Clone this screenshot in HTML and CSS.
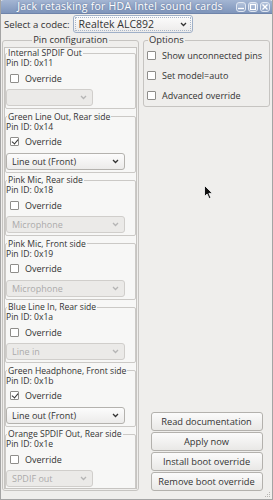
FILE: index.html
```html
<!DOCTYPE html>
<html lang="en">
<head>
    <meta charset="UTF-8">
    <meta name="viewport" content="width=device-width, initial-scale=1.0">
    <title>Jack retasking for HDA Intel sound cards</title>
    <link rel="stylesheet" href="styles.css">
</head>
<body>
    <div class="window">
        <div class="titlebar">
            <span class="title">Jack retasking for HDA Intel sound cards</span>
            <div class="wm-buttons">
                <span class="wm-btn"><svg width="8" height="8" viewBox="0 0 8 8"><path d="M1 5.5h6" stroke="#fff" stroke-width="1.4"/></svg></span>
                <span class="wm-btn"><svg width="8" height="8" viewBox="0 0 8 8"><rect x="1.5" y="1.5" width="5" height="5" fill="none" stroke="#fff" stroke-width="1.2"/></svg></span>
                <span class="wm-btn"><svg width="8" height="8" viewBox="0 0 8 8"><path d="M1.5 1.5l5 5M6.5 1.5l-5 5" stroke="#fff" stroke-width="1.4"/></svg></span>
            </div>
        </div>

        <div class="content">
            <div class="codec-row">
                <span class="codec-label">Select a codec:</span>
                <div class="combo focused codec-combo">
                    <span class="combo-text">Realtek ALC892</span>
                    <svg class="chevron" width="7" height="5" viewBox="0 0 7 5"><path d="M1 1l2.5 2.5L6 1" fill="none" stroke="#333" stroke-width="1.3"/></svg>
                </div>
            </div>

            <div class="columns">
                <fieldset class="frame pins-frame">
                    <legend>Pin configuration</legend>
                    <div class="viewport" id="pinList"></div>
                </fieldset>

                <div class="right-col">
                    <fieldset class="frame options">
                        <legend>Options</legend>
                        <label class="check-row"><span class="checkbox"></span>Show unconnected pins</label>
                        <label class="check-row"><span class="checkbox"></span>Set model=auto</label>
                        <label class="check-row"><span class="checkbox"></span>Advanced override</label>
                    </fieldset>

                    <div class="buttons">
                        <button class="btn">Read documentation</button>
                        <button class="btn">Apply now</button>
                        <button class="btn">Install boot override</button>
                        <button class="btn">Remove boot override</button>
                    </div>
                </div>
            </div>
        </div>

        <svg class="grip" width="6" height="6" viewBox="0 0 6 6">
            <rect x="4" y="0" width="1" height="1" fill="#b8b6b3"/>
            <rect x="2" y="2" width="1" height="1" fill="#b8b6b3"/>
            <rect x="4" y="2" width="1" height="1" fill="#b8b6b3"/>
            <rect x="0" y="4" width="1" height="1" fill="#b8b6b3"/>
            <rect x="2" y="4" width="1" height="1" fill="#b8b6b3"/>
            <rect x="4" y="4" width="1" height="1" fill="#b8b6b3"/>
        </svg>

        <svg class="cursor" width="10" height="15" viewBox="0 0 10 15">
            <path d="M0.5 0.5v11l2.6-2.5 2 4.6 1.8-0.8-2-4.4h3.6z" fill="#111" stroke="#fff" stroke-width="0.8"/>
        </svg>
    </div>

    <script>
        let pins = [
            { name: "Internal SPDIF Out", id: "0x11", override: false, value: "", width: 87 },
            { name: "Green Line Out, Rear side", id: "0x14", override: true, value: "Line out (Front)", width: 119 },
            { name: "Pink Mic, Rear side", id: "0x18", override: false, value: "Microphone", width: 119 },
            { name: "Pink Mic, Front side", id: "0x19", override: false, value: "Microphone", width: 119 },
            { name: "Blue Line In, Rear side", id: "0x1a", override: false, value: "Line in", width: 119 },
            { name: "Green Headphone, Front side", id: "0x1b", override: true, value: "Line out (Front)", width: 119 },
            { name: "Orange SPDIF Out, Rear side", id: "0x1e", override: false, value: "SPDIF out", width: 87 }
        ];

        let list = document.getElementById("pinList");
        for (let pin of pins) {
            let frame = document.createElement("fieldset");
            frame.className = "pin";
            let state = pin.override ? "" : " disabled";
            let stroke = pin.override ? "#333" : "#b5b5b5";
            frame.innerHTML = `
                <legend>${pin.name}</legend>
                <div class="pin-id">Pin ID: ${pin.id}</div>
                <label class="check-row"><span class="checkbox${pin.override ? " checked" : ""}"></span>Override</label>
                <div class="combo${state}" style="width: ${pin.width}px">
                    <span class="combo-text">${pin.value}</span>
                    <svg class="chevron" width="7" height="5" viewBox="0 0 7 5"><path d="M1 1l2.5 2.5L6 1" fill="none" stroke="${stroke}" stroke-width="1.3"/></svg>
                </div>
            `;
            list.appendChild(frame);
        }
    </script>
</body>
</html>
```

FILE: styles.css
```css
* {
    box-sizing: border-box;
}
body {
    margin: 0;
    font-family: "Open Sans", "DejaVu Sans", sans-serif;
    font-size: 9px;
    color: #333;
    background: #d8d8d8;
}
.window {
    position: relative;
    width: 273px;
    height: 500px;
    background: #efeeec;
    border: 1px solid #a4a4a4;
    border-top: none;
    overflow: hidden;
}
.titlebar {
    display: flex;
    align-items: center;
    height: 14px;
    margin: 0 -1px;
    background: linear-gradient(#a4b6d3, #7f95bb);
    border-radius: 4px 4px 0 0;
    border-bottom: 1px solid #6f84aa;
}
.title {
    flex: 1;
    text-align: center;
    color: #fff;
    font-size: 10.5px;
    line-height: 13px;
    text-shadow: 0 0 2px #5a6d90;
    letter-spacing: 0.25px;
    white-space: nowrap;
    padding-left: 4px;
}
.wm-buttons {
    display: flex;
    gap: 2px;
    margin-right: 3px;
}
.wm-btn {
    display: flex;
    align-items: center;
    justify-content: center;
    width: 10px;
    height: 10px;
    border: 1px solid #dfe6f1;
    border-radius: 3px;
    background: linear-gradient(#b3c3dc, #8fa3c5);
}
.content {
    padding: 1px 2px 0 1px;
}
.codec-row {
    display: flex;
    align-items: center;
    gap: 3px;
}
.codec-label {
    padding-left: 2px;
    font-size: 9.6px;
}
.combo {
    display: flex;
    align-items: center;
    justify-content: space-between;
    height: 17px;
    padding: 0 5px 0 5px;
    border: 1px solid #b4b2ae;
    border-radius: 3px;
    background: linear-gradient(#fcfcfc, #ecebea);
}
.codec-combo {
    width: 120px;
    height: 18px;
    font-size: 10.5px;
}
.combo.focused {
    border-color: #9fb0c8;
    outline: 1px dotted #a9b6c9;
    outline-offset: -3px;
}
.combo.disabled {
    color: #ababab;
    border-color: #d0cecb;
    background: #ebeae8;
}
.columns {
    display: flex;
    gap: 4px;
    height: 456px;
    margin-top: 2px;
}
.frame {
    margin: 0;
    border: 1px solid #c6c4c1;
    border-radius: 3px;
    min-width: 0;
}
.frame legend {
    padding: 0 1px;
    line-height: 10px;
    font-size: 9.4px;
}
.pins-frame {
    width: 137px;
    padding: 2px 1px 1px 1px;
}
.pins-frame legend {
    margin: 0 auto;
}
.viewport {
    height: 100%;
    overflow: hidden;
    border: 1px solid #c6c4c1;
    background: #f7f7f6;
}
.pin {
    margin: 0 0 2.5px;
    padding: 0 0 2px 0;
    border: 1px solid #cbc9c6;
    border-radius: 2px;
    min-width: 0;
}
.pin legend {
    padding: 0 1px;
    margin-left: 1px;
    font-size: 8.6px;
    line-height: 10px;
    white-space: nowrap;
}
.pin-id {
    font-size: 8.6px;
    line-height: 10px;
}
.check-row {
    display: flex;
    align-items: center;
    height: 20px;
}
.pin .check-row {
    padding-left: 4px;
}
.checkbox {
    width: 9px;
    height: 9px;
    margin-right: 6px;
    border: 1px solid #8e8d8a;
    border-radius: 1px;
    background: #fff;
    position: relative;
}
.checkbox.checked::after {
    content: "";
    position: absolute;
    left: 2px;
    top: 0;
    width: 3px;
    height: 5px;
    border: solid #333;
    border-width: 0 1.3px 1.3px 0;
    transform: rotate(40deg);
}
.pin .combo {
    margin-top: 1px;
}
.right-col {
    flex: 1;
    display: flex;
    flex-direction: column;
    align-items: center;
}
.options {
    width: 100%;
    padding: 0 3px 1px 3px;
}
.options legend {
    margin-left: 1px;
}
.buttons {
    margin-top: auto;
    display: flex;
    flex-direction: column;
    gap: 1px;
}
.btn {
    width: 112px;
    height: 19px;
    padding: 0;
    font-family: inherit;
    font-size: 9.3px;
    color: #333;
    border: 1px solid #b3b1ad;
    border-radius: 3px;
    background: linear-gradient(#fbfbfb, #e9e8e6);
}
.grip {
    position: absolute;
    right: 1px;
    bottom: 1px;
}
.cursor {
    position: absolute;
    left: 203px;
    top: 185px;
}
```
